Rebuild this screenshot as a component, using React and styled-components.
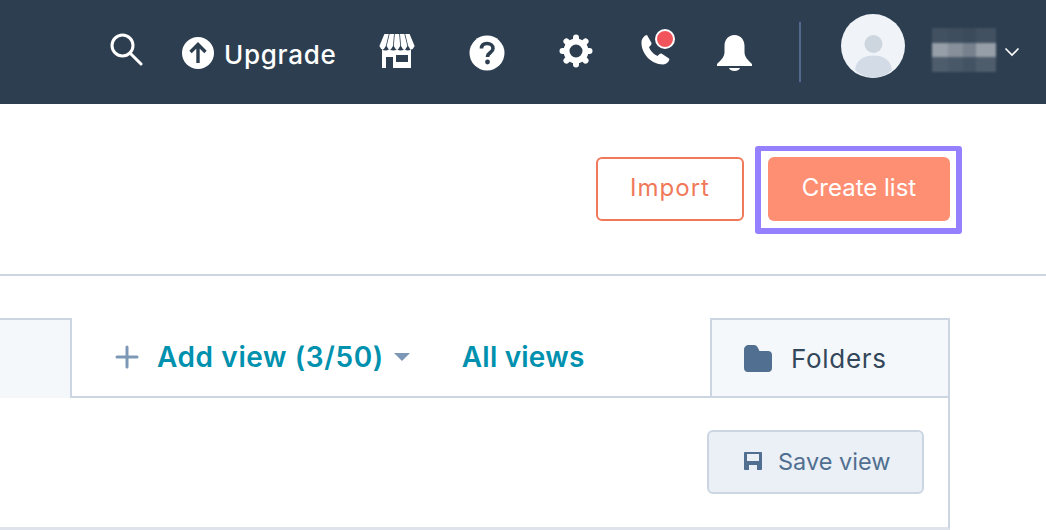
import styled, { createGlobalStyle } from "styled-components";

const GlobalStyle = createGlobalStyle`
  html, body {
    margin: 0;
    padding: 0;
    background: #ffffff;
    overflow: hidden;
  }
  body {
    font-family: "Inter", "Open Sans", sans-serif;
  }
`;

const awningStripes = [0, 1, 2, 3, 4];
const gearTeeth = [0, 45, 90, 135, 180, 225, 270, 315];

function SearchIcon() {
  return (
    <svg width="34" height="34" viewBox="0 0 34 34" fill="none" stroke="#fff" strokeWidth="3" strokeLinecap="round">
      <circle cx="13.5" cy="13.5" r="10.5" />
      <path d="M21.5 21.5 L32 32" />
    </svg>
  );
}

function UpgradeIcon() {
  return (
    <svg width="32" height="32" viewBox="0 0 32 32">
      <circle cx="16" cy="16" r="16" fill="#fff" />
      <path d="M16 26 V8 M8.5 15 L16 7.5 L23.5 15" fill="none" stroke="#2d3e50" strokeWidth="3.4" />
    </svg>
  );
}

function StoreIcon() {
  return (
    <svg width="36" height="34" viewBox="0 0 36 34" fill="#fff">
      {awningStripes.map((i) => {
        const topL = 5 + i * 5.2 + 0.4;
        const topR = 5 + (i + 1) * 5.2 - 0.4;
        const botL = i * 7.2 + 0.4;
        const botR = (i + 1) * 7.2 - 0.4;
        return <path key={i} d={`M${topL} 0 H${topR} L${botR} 12 Q${(botL + botR) / 2} 19 ${botL} 12 Z`} />;
      })}
      <path fillRule="evenodd" d="M3 15 Q6 18 10.5 15 Q14.5 18 18 15 Q21.5 18 25.5 15 Q29 18 32 15 V34 H3 Z M7 23 V34 H14 V23 Z M17 21 V28 H29 V21 Z" />
    </svg>
  );
}

function HelpIcon() {
  return (
    <svg width="36" height="36" viewBox="0 0 36 36">
      <circle cx="18" cy="18" r="17.5" fill="#fff" />
      <path d="M12.5 13.5 C12.5 10 15 8.5 18 8.5 C21.5 8.5 24 10.5 24 13.5 C24 17.5 18.5 17.5 18.5 22" fill="none" stroke="#2d3e50" strokeWidth="3.6" />
      <circle cx="18.5" cy="27" r="2.4" fill="#2d3e50" />
    </svg>
  );
}

function GearIcon() {
  return (
    <svg width="34" height="34" viewBox="0 0 34 34" fill="none" stroke="#fff">
      <circle cx="17" cy="17" r="9.5" strokeWidth="6" />
      {gearTeeth.map((deg) => (
        <path key={deg} d="M17 6 V3.5" strokeWidth="6" strokeLinecap="round" transform={`rotate(${deg} 17 17)`} />
      ))}
    </svg>
  );
}

function PhoneIcon() {
  return (
    <svg width="32" height="32" viewBox="0 0 32 32" fill="#fff">
      <path d="M7 1 L11.5 9 C12 10.5 10 12 9 13 C10 16.5 14 20.5 17.5 22 C18.5 21 20 19 21.5 19.5 L29 24.5 C30.5 26 27 30.5 23 30.5 C11 30.5 1 19 1.5 8 C1.5 4.5 5 1 7 1 Z" />
    </svg>
  );
}

function BellIcon() {
  return (
    <svg width="35" height="37" viewBox="0 0 35 37" fill="#fff">
      <path d="M17.5 0 C24 0 27.5 5 27.5 11 V17 C27.5 22 31 25 35 29 V31 H0 V29 C4 25 7.5 22 7.5 17 V11 C7.5 5 11 0 17.5 0 Z" />
      <path d="M12 33 H23 C22 37 13 37 12 33 Z" />
    </svg>
  );
}

function PersonIcon() {
  return (
    <svg width="64" height="64" viewBox="0 0 64 64">
      <circle cx="32" cy="32" r="32" fill="#f0f4f9" />
      <circle cx="32.5" cy="30" r="9" fill="#cdd5df" />
      <path d="M14 56 C15 46 23 41.5 32.5 41.5 C42 41.5 50 46 51 56 C41 66 24 66 14 56 Z" fill="#d3dce6" />
    </svg>
  );
}

function ChevronIcon() {
  return (
    <svg width="16" height="10" viewBox="0 0 16 10" fill="none" stroke="#fff" strokeWidth="1.6">
      <path d="M1.5 1.5 L8 8 L14.5 1.5" />
    </svg>
  );
}

function PlusIcon() {
  return (
    <svg width="24" height="24" viewBox="0 0 24 24" fill="none" stroke="#7c98b6" strokeWidth="3" strokeLinecap="round">
      <path d="M12 2 V22 M2 12 H22" />
    </svg>
  );
}

function FolderIcon() {
  return (
    <svg width="28" height="27" viewBox="0 0 28 27" fill="#516f90">
      <path d="M5 0 H10 C12 0 13 1 14 3 L15.5 6 H24 C26.5 6 28 7.5 28 10 V23 C28 25.5 26.5 27 24 27 H4 C1.5 27 0 25.5 0 23 V5 C0 2 2 0 5 0 Z" />
    </svg>
  );
}

function SaveIcon() {
  return (
    <svg width="18" height="18" viewBox="0 0 18 18" fill="#516f90">
      <path fillRule="evenodd" d="M1 0 H17 C17.6 0 18 0.4 18 1 V17 C18 17.6 17.6 18 17 18 H1 C0.4 18 0 17.6 0 17 V1 C0 0.4 0.4 0 1 0 Z M3 2 V9 H15 V2 Z M5 13 V18 H13 V13 Z" />
    </svg>
  );
}

export default function App() {
  return (
    <Page>
      <GlobalStyle />
      <TopBar>
        <IconSlot $left={109} $top={-3}><SearchIcon /></IconSlot>
        <UpgradeLink>
          <UpgradeIcon />
          <UpgradeLabel>Upgrade</UpgradeLabel>
        </UpgradeLink>
        <IconSlot $left={43} $top={-1}><StoreIcon /></IconSlot>
        <IconSlot $left={54} $top={1}><HelpIcon /></IconSlot>
        <IconSlot $left={54} $top={-1}><GearIcon /></IconSlot>
        <PhoneSlot>
          <PhoneIcon />
          <PhoneDot />
        </PhoneSlot>
        <IconSlot $left={45} $top={1}><BellIcon /></IconSlot>
        <Divider />
        <Avatar><PersonIcon /></Avatar>
        <BlurredName>
          <BlurRow $shade={0.1} />
          <BlurRow $shade={0.5} />
          <BlurRow $shade={0.16} />
        </BlurredName>
        <IconSlot $left={8} $top={0}><ChevronIcon /></IconSlot>
      </TopBar>

      <ActionRow>
        <OutlineButton>Import</OutlineButton>
        <Highlight>
          <PrimaryButton>Create list</PrimaryButton>
        </Highlight>
      </ActionRow>

      <Panel>
        <TabRow>
          <StubTab />
          <AddView>
            <PlusIcon />
            <TealLabel>Add view (3/50)</TealLabel>
            <Caret />
          </AddView>
          <AllViews>All views</AllViews>
          <FolderTab>
            <FolderIcon />
            <FolderLabel>Folders</FolderLabel>
          </FolderTab>
        </TabRow>
        <SaveRow>
          <SaveButton>
            <SaveIcon />
            Save view
          </SaveButton>
        </SaveRow>
      </Panel>
    </Page>
  );
}

const Page = styled.div`
  width: 1046px;
  height: 530px;
  overflow: hidden;
  background: #ffffff;
`;

const TopBar = styled.header`
  display: flex;
  align-items: center;
  height: 104px;
  background: #2d3e50;
`;

const IconSlot = styled.div`
  display: flex;
  flex: none;
  margin-left: ${(p) => p.$left}px;
  transform: translateY(${(p) => p.$top}px);
`;

const UpgradeLink = styled.div`
  display: flex;
  align-items: center;
  gap: 10px;
  margin-left: 39px;
  height: 32px;
  transform: translateY(1px);
`;

const UpgradeLabel = styled.span`
  width: 112px;
  padding-top: 2px;
  color: #ffffff;
  font-size: 26px;
  font-weight: 500;
  letter-spacing: 0.7px;
  white-space: nowrap;
`;

const PhoneSlot = styled.div`
  position: relative;
  flex: none;
  width: 32px;
  height: 32px;
  margin-left: 47px;
  transform: translateY(-2px);
`;

const PhoneDot = styled.span`
  position: absolute;
  top: -5px;
  left: 15px;
  width: 16px;
  height: 16px;
  border-radius: 50%;
  border: 2px solid #ffffff;
  background: #f2545b;
`;

const Divider = styled.div`
  flex: none;
  width: 2px;
  height: 60px;
  margin-left: 47px;
  background: #4f6a8c;
`;

const Avatar = styled.div`
  display: flex;
  flex: none;
  margin-left: 40px;
  transform: translateY(-6px);
`;

const BlurredName = styled.div`
  display: flex;
  flex: none;
  flex-direction: column;
  width: 64px;
  height: 44px;
  margin-left: 27px;
  transform: translateY(-2px);
  filter: blur(1.2px);
`;

const BlurRow = styled.div`
  flex: 1;
  background: linear-gradient(
    to right,
    rgba(255, 255, 255, ${(p) => p.$shade}) 0 25%,
    rgba(255, 255, 255, ${(p) => p.$shade * 0.85}) 25% 48%,
    rgba(255, 255, 255, ${(p) => p.$shade * 0.7}) 48% 68%,
    rgba(255, 255, 255, ${(p) => p.$shade}) 68% 100%
  );
`;

const ActionRow = styled.div`
  display: flex;
  align-items: flex-start;
  height: 172px;
  padding: 42px 84px 0 596px;
  box-sizing: border-box;
  border-bottom: 2px solid #cbd6e2;
`;

const BaseButton = styled.button`
  box-sizing: border-box;
  height: 64px;
  border-radius: 6px;
  font-family: inherit;
  font-size: 24px;
  padding: 0 0 3px;
`;

const OutlineButton = styled(BaseButton)`
  width: 148px;
  margin-top: 11px;
  background: #ffffff;
  border: 2px solid #f0795a;
  color: #f0795a;
  letter-spacing: 1px;
`;

const Highlight = styled.div`
  display: flex;
  flex: none;
  margin-left: 11px;
  padding: 6px 6px 7px 7px;
  border-style: solid;
  border-color: #9580ff;
  border-width: 5px 6px 6px;
  border-radius: 3px;
`;

const PrimaryButton = styled(BaseButton)`
  width: 182px;
  background: #ff8f73;
  border: none;
  color: #ffffff;
`;

const Panel = styled.div`
  box-sizing: border-box;
  width: 950px;
  height: 212px;
  margin-top: 42px;
  border-right: 2px solid #cbd6e2;
  border-bottom: 3px solid #dfe3eb;
`;

const TabRow = styled.div`
  display: flex;
  align-items: stretch;
  box-sizing: border-box;
  height: 80px;
  border-bottom: 2px solid #cbd6e2;
`;

const StubTab = styled.div`
  box-sizing: border-box;
  flex: none;
  width: 72px;
  margin-bottom: -2px;
  background: #f5f8fa;
  border-top: 2px solid #cbd6e2;
  border-right: 2px solid #cbd6e2;
`;

const AddView = styled.div`
  display: flex;
  flex: none;
  align-items: center;
  margin-left: 43px;
`;

const TealLabel = styled.span`
  margin-left: 18px;
  color: #0091ae;
  font-size: 28px;
  font-weight: 600;
  letter-spacing: 0.6px;
  white-space: nowrap;
`;

const Caret = styled.span`
  width: 0;
  height: 0;
  margin-left: 10px;
  border-left: 8px solid transparent;
  border-right: 8px solid transparent;
  border-top: 8px solid #7c98b6;
`;

const AllViews = styled(TealLabel)`
  display: flex;
  flex: none;
  align-items: center;
  margin-left: 52px;
  letter-spacing: 0.2px;
`;

const FolderTab = styled.div`
  display: flex;
  align-items: center;
  box-sizing: border-box;
  width: 238px;
  margin-left: auto;
  margin-bottom: -2px;
  padding: 0 0 0 32px;
  background: #f5f8fa;
  border: 2px solid #cbd6e2;
  border-right: none;
`;

const FolderLabel = styled.span`
  margin-left: 19px;
  color: #33475b;
  font-size: 26px;
  letter-spacing: 0.7px;
`;

const SaveRow = styled.div`
  display: flex;
  justify-content: flex-end;
  padding: 32px 24px 0 0;
`;

const SaveButton = styled.button`
  display: flex;
  align-items: center;
  gap: 16px;
  box-sizing: border-box;
  width: 217px;
  height: 64px;
  padding: 0 0 2px 35px;
  background: #eaf0f6;
  border: 2px solid #cbd6e2;
  border-radius: 6px;
  color: #516f90;
  font-family: inherit;
  font-size: 23.5px;
`;
